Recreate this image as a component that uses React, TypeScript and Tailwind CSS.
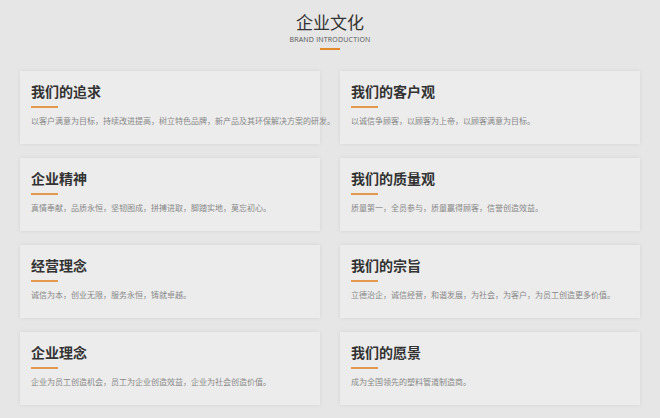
import React from "react";

const items: [string, string][] = [
  ["我们的追求", "以客户满意为目标，持续改进提高，树立特色品牌，新产品及其环保解决方案的研发。"],
  ["我们的客户观", "以诚信争顾客，以顾客为上帝，以顾客满意为目标。"],
  ["企业精神", "真情奉献，品质永恒，坚韧图成，拼搏进取，脚踏实地，莫忘初心。"],
  ["我们的质量观", "质量第一，全员参与，质量赢得顾客，信誉创造效益。"],
  ["经营理念", "诚信为本，创业无限，服务永恒，铸就卓越。"],
  ["我们的宗旨", "立德治企，诚信经营，和谐发展，为社会，为客户，为员工创造更多价值。"],
  ["企业理念", "企业为员工创造机会，员工为企业创造效益，企业为社会创造价值。"],
  ["我们的愿景", "成为全国领先的塑料管道制造商。"],
];

export default function App() {
  return (
    <div
      className="w-[660px] h-[418px] overflow-hidden bg-[#e6e6e6]"
      style={{ fontFamily: '"Noto Sans CJK SC", "Noto Sans", sans-serif' }}
    >
      <div className="flex flex-col items-center pt-[10px]">
        <div className="text-[17px] leading-[24px] text-[#333]">企业文化</div>
        <div className="text-[7px] leading-[10px] text-[#555] mt-[1px] tracking-[0.2px]" style={{ fontFamily: '"Open Sans", sans-serif' }}>BRAND INTRODUCTION</div>
        <div className="w-[20px] h-[2px] bg-[#e08a2a] mt-[3px]" />
      </div>
      <div className="grid grid-cols-2 gap-x-[20px] gap-y-[14px] px-[20px] mt-[21px] w-full">
        {items.map(([t, d]) => (
          <div key={t} className="h-[73px] bg-[#ececec] shadow-[0_0_4px_rgba(0,0,0,0.08)] px-[11px] pt-[10px]">
            <div className="text-[14px] leading-[20px] font-semibold text-[#333]">{t}</div>
            <div className="w-[27px] h-[2px] bg-[#e39a50] mt-[5px]" />
            <div className="text-[8px] leading-[12px] text-[#888] mt-[7px] whitespace-nowrap">{d}</div>
          </div>
        ))}
      </div>
    </div>
  );
}
